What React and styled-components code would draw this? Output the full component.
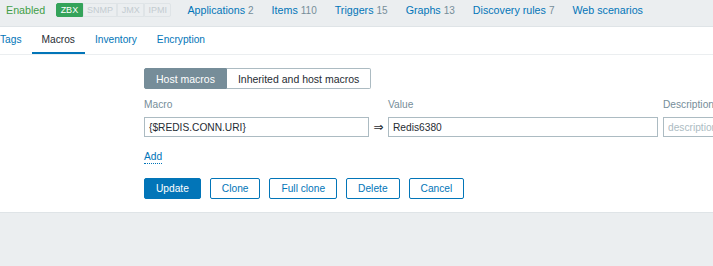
import React from "react";
import styled, { createGlobalStyle } from "styled-components";

const GlobalStyle = createGlobalStyle`
  html, body { margin: 0; padding: 0; overflow: hidden; background: #ebeef0; }
  body {
    font-family: "Liberation Sans", Arial, sans-serif;
    font-size: 10.2px;
    color: #1f2c33;
  }
  * { box-sizing: border-box; }
`;

const Page = styled.div`
  width: 713px;
  min-height: 266px;
  background: #ebeef0;
`;

const StatusBar = styled.div`
  display: flex;
  align-items: flex-start;
  height: 27px;
  padding: 3px 0 0 6px;
  border-bottom: 1px solid #dfe4e7;
  background: #ebeef0;
  white-space: nowrap;
  font-size: 10.7px;
`;

const StatusText = styled.span`
  line-height: 14px;
  color: #429e47;
`;

const Badges = styled.div`
  display: flex;
  margin-left: 11px;
  margin-right: 16px;
`;

const Badge = styled.span`
  height: 14px;
  line-height: 12px;
  padding: 0 3.4px;
  font-size: 9px;
  border: 1px solid ${(p) => (p.$on ? "#34a35a" : "#dfe4e7")};
  background: ${(p) => (p.$on ? "#34a35a" : "transparent")};
  color: ${(p) => (p.$on ? "#ffffff" : "#c3ccd1")};
  border-radius: ${(p) => (p.$first ? "2px 0 0 2px" : p.$last ? "0 2px 2px 0" : "0")};
  & + & { border-left: ${(p) => (p.$afterOn ? "none" : "1px solid #dfe4e7")}; }
`;

const NavList = styled.div`
  display: flex;
  gap: 18px;
`;

const NavLink = styled.a`
  line-height: 14px;
  color: #0275b8;
  text-decoration: none;
`;

const Count = styled.span`
  color: #768d99;
  font-size: 10px;
  margin-left: 3px;
`;

const Panel = styled.div`
  background: #ffffff;
  border-bottom: 1px solid #dfe4e7;
`;

const TabList = styled.div`
  display: flex;
  height: 28px;
  margin-left: -10px;
  border-bottom: 1px solid #ebeef0;
`;

const Tab = styled.a`
  display: block;
  height: 27px;
  padding: 0 10px;
  line-height: 26px;
  color: ${(p) => (p.$active ? "#1f2c33" : "#0275b8")};
  border-bottom: 2px solid ${(p) => (p.$active ? "#0275b8" : "transparent")};
  text-decoration: none;
`;

const FormBody = styled.div`
  padding: 13px 0 13px 144px;
`;

const Segmented = styled.div`
  display: inline-flex;
`;

const SegButton = styled.button`
  height: 21px;
  padding: 0 11px;
  font: inherit;
  font-size: 10.5px;
  border: 1px solid ${(p) => (p.$active ? "#768d99" : "#acbbc2")};
  background: ${(p) => (p.$active ? "#768d99" : "#ffffff")};
  color: ${(p) => (p.$active ? "#ffffff" : "#1f2c33")};
  border-radius: ${(p) => (p.$active ? "2px 0 0 2px" : "0 2px 2px 0")};
  ${(p) => (p.$active ? "" : "border-left: none;")}
`;

const MacroGrid = styled.div`
  display: grid;
  grid-template-columns: 225px 19px 270px 300px;
  row-gap: 5px;
  margin-top: 9px;
  align-items: center;
`;

const HeadCell = styled.div`
  line-height: 14px;
  color: #768d99;
  padding-left: ${(p) => (p.$pad ? "5px" : "0")};
`;

const Field = styled.input`
  height: 20px;
  width: ${(p) => p.$w || "100%"};
  margin-left: ${(p) => (p.$pad ? "5px" : "0")};
  padding: 0 4px;
  font: inherit;
  color: #1f2c33;
  border: 1px solid #acbbc2;
  border-radius: 0;
  background: #ffffff;
  outline: none;
  &::placeholder { color: #acbbc2; }
`;

const Arrow = styled.span`
  text-align: center;
  color: #1f2c33;
  font-family: "DejaVu Sans", sans-serif;
  font-size: 12px;
  line-height: 20px;
`;

const AddLink = styled.a`
  display: inline-block;
  margin-top: 13px;
  line-height: 13px;
  color: #0275b8;
  text-decoration: none;
  border-bottom: 1px dotted #0275b8;
`;

const ButtonRow = styled.div`
  display: flex;
  gap: 9px;
  margin-top: 14px;
`;

const Button = styled.button`
  height: 21px;
  padding: 0 11px;
  font: inherit;
  border-radius: 2px;
  border: 1px solid #0275b8;
  background: ${(p) => (p.$primary ? "#0275b8" : "#ffffff")};
  color: ${(p) => (p.$primary ? "#ffffff" : "#0275b8")};
`;

const nav = [
  ["Applications", 2],
  ["Items", 110],
  ["Triggers", 15],
  ["Graphs", 13],
  ["Discovery rules", 7],
  ["Web scenarios", null],
];

export default function App() {
  return (
    <Page>
      <GlobalStyle />
      <StatusBar>
        <StatusText>Enabled</StatusText>
        <Badges>
          <Badge $on $first>ZBX</Badge>
          <Badge $afterOn>SNMP</Badge>
          <Badge>JMX</Badge>
          <Badge $last>IPMI</Badge>
        </Badges>
        <NavList>
          {nav.map(([label, n]) => (
            <NavLink key={label}>
              {label}
              {n !== null && <Count>{n}</Count>}
            </NavLink>
          ))}
        </NavList>
      </StatusBar>
      <Panel>
        <TabList>
          <Tab>Tags</Tab>
          <Tab $active>Macros</Tab>
          <Tab>Inventory</Tab>
          <Tab>Encryption</Tab>
        </TabList>
        <FormBody>
          <Segmented>
            <SegButton $active>Host macros</SegButton>
            <SegButton>Inherited and host macros</SegButton>
          </Segmented>
          <MacroGrid>
            <HeadCell>Macro</HeadCell>
            <span />
            <HeadCell>Value</HeadCell>
            <HeadCell $pad>Description</HeadCell>
            <Field defaultValue="{$REDIS.CONN.URI}" />
            <Arrow>⇒</Arrow>
            <Field defaultValue="Redis6380" />
            <Field $pad $w="270px" placeholder="description" />
          </MacroGrid>
          <AddLink>Add</AddLink>
          <ButtonRow>
            <Button $primary>Update</Button>
            <Button>Clone</Button>
            <Button>Full clone</Button>
            <Button>Delete</Button>
            <Button>Cancel</Button>
          </ButtonRow>
        </FormBody>
      </Panel>
    </Page>
  );
}
